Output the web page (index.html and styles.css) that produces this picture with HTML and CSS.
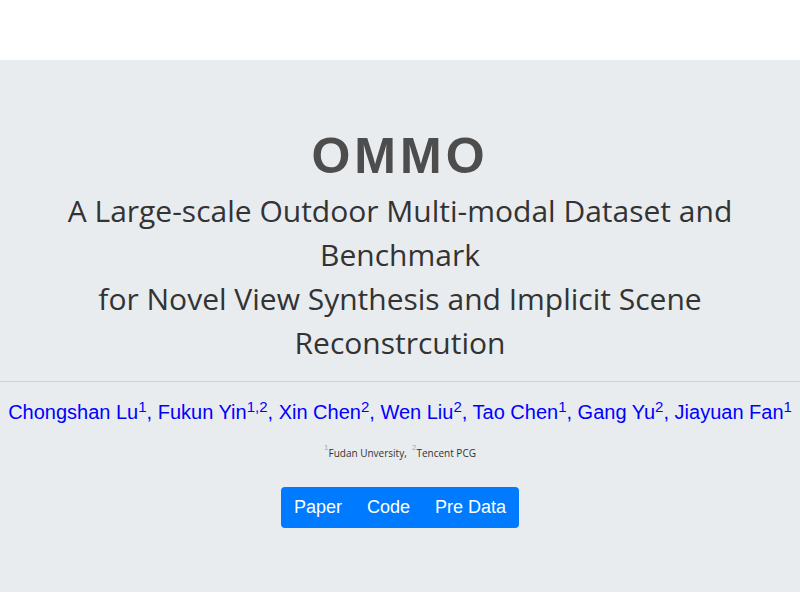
FILE: index.html
```
<!DOCTYPE html>
<html lang="en">
<head>
<meta charset="utf-8">
<meta name="viewport" content="width=device-width, initial-scale=1">
<title>OMMO</title>
<link rel="stylesheet" href="styles.css">
</head>
<body>
<header class="hero">
  <h1 class="title">OMMO</h1>
  <h2 class="subtitle">A Large-scale Outdoor Multi-modal Dataset and Benchmark<br>for Novel View Synthesis and Implicit Scene Reconstrcution</h2>
  <hr class="rule">
  <p class="authors"><a href="#">Chongshan Lu<sup>1</sup></a>, <a href="#">Fukun Yin<sup>1,2</sup></a>, <a href="#">Xin Chen<sup>2</sup></a>, <a href="#">Wen Liu<sup>2</sup></a>, <a href="#">Tao Chen<sup>1</sup></a>, <a href="#">Gang Yu<sup>2</sup></a>, <a href="#">Jiayuan Fan<sup>1</sup></a></p>
  <p class="affiliations"><sup>1</sup>Fudan Unversity, &nbsp;<sup>2</sup>Tencent PCG</p>
  <nav class="links"><a href="#">Paper</a><a href="#">Code</a><a href="#">Pre Data</a></nav>
</header>
</body>
</html>
```
FILE: styles.css
```
* { box-sizing: border-box; }
body {
  margin: 0;
  padding-top: 60px;
  background: #fff;
  color: #333;
  font-family: "Open Sans", sans-serif;
}
.hero {
  padding: 64px 0;
  background: #e8ecef;
  text-align: center;
}
.title {
  margin: 0;
  color: #4d4d4d;
  font: 700 50px/65px "Liberation Sans", Arial, sans-serif;
  letter-spacing: 4px;
}
.subtitle {
  margin: 0 48px 16px;
  font-size: 30px;
  font-weight: 400;
  line-height: 44px;
}
.rule {
  margin: 0 0 16px;
  border: 0;
  border-top: 1px solid #ced1d4;
}
.authors {
  margin: 0 0 20px;
  font: 20px/28px "Liberation Sans", Arial, sans-serif;
}
.authors, .authors a { color: #00f; text-decoration: none; }
sup {
  font-size: 15px;
  line-height: 0;
  vertical-align: 7px;
}
.affiliations {
  margin: 0 0 26px;
  font-size: 10px;
  line-height: 15px;
}
.affiliations sup {
  color: #aaa;
  font-family: "Liberation Sans", Arial, sans-serif;
  font-size: 8px;
}
.links {
  display: inline-flex;
  border-radius: 4px;
  background: #007bff;
}
.links a {
  padding: 6px 12px;
  border: 1px solid transparent;
  color: #fff;
  font: 18px/27px "Liberation Sans", Arial, sans-serif;
  text-decoration: none;
}
.links a + a { margin-left: -1px; }
```
